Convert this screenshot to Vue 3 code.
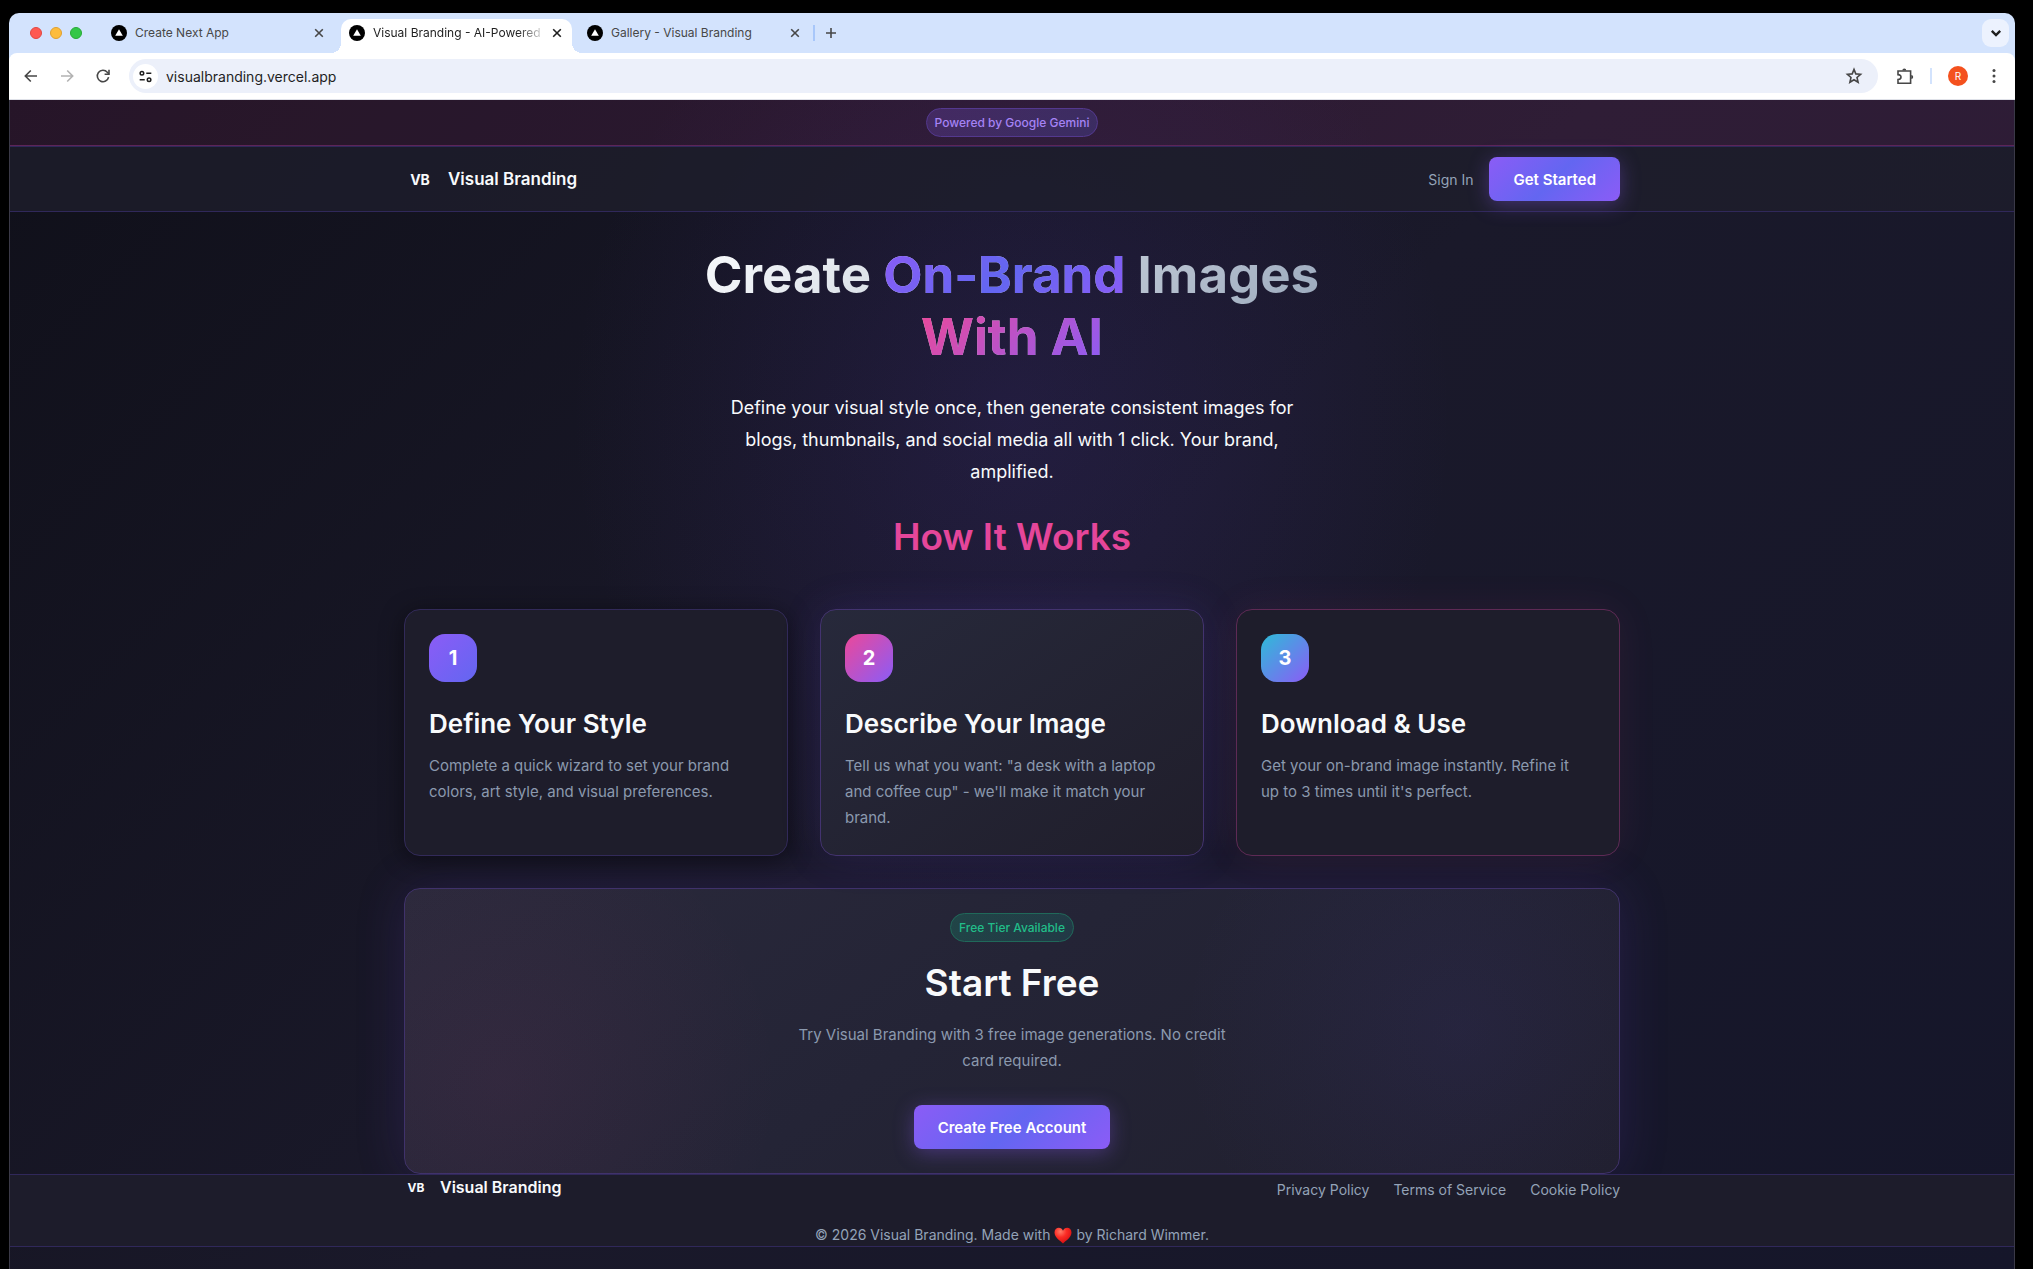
<script setup>
import { ref } from 'vue'

const tabs = [
  { id: 1, title: 'Create Next App' },
  { id: 2, title: 'Visual Branding - AI-Powered' },
  { id: 3, title: 'Gallery - Visual Branding' },
]
const activeTab = ref(2)
const address = ref('visualbranding.vercel.app')

const steps = [
  {
    number: 1,
    kind: 'plain',
    title: 'Define Your Style',
    text: 'Complete a quick wizard to set your brand colors, art style, and visual preferences.',
  },
  {
    number: 2,
    kind: 'violet',
    title: 'Describe Your Image',
    text: 'Tell us what you want: "a desk with a laptop and coffee cup" - we\'ll make it match your brand.',
  },
  {
    number: 3,
    kind: 'pink',
    title: 'Download & Use',
    text: 'Get your on-brand image instantly. Refine it up to 3 times until it\'s perfect.',
  },
]

const footerLinks = ['Privacy Policy', 'Terms of Service', 'Cookie Policy']
</script>

<template>
  <div class="desktop">
    <div class="window">
      <div class="tab-bar">
        <div class="lights">
          <button class="light red" aria-label="Close window"></button>
          <button class="light yellow" aria-label="Minimize window"></button>
          <button class="light green" aria-label="Zoom window"></button>
        </div>

        <div class="tabs">
          <div v-for="tab in tabs" :key="tab.id" class="tab" :class="{ active: tab.id === activeTab }">
            <button class="tab-main" @click="activeTab = tab.id">
              <svg class="favicon" viewBox="0 0 16 16" aria-hidden="true">
                <circle cx="8" cy="8" r="8" fill="#000" />
                <path d="M8 4.2 11.8 10.8H4.2Z" fill="#fff" />
              </svg>
              <span class="tab-title">{{ tab.title }}</span>
            </button>
            <button class="tab-close" aria-label="Close tab">
              <svg viewBox="0 0 10 10"><path d="M1.2 1.2 8.8 8.8M8.8 1.2 1.2 8.8" /></svg>
            </button>
          </div>
        </div>

        <span class="tab-divider"></span>
        <button class="new-tab" aria-label="New tab">
          <svg viewBox="0 0 12 12"><path d="M6 1V11M1 6H11" /></svg>
        </button>
        <button class="tab-search" aria-label="Search tabs">
          <svg viewBox="0 0 10 10"><path d="M1.5 3.2 5 6.7 8.5 3.2" /></svg>
        </button>
      </div>

      <div class="toolbar">
        <button class="tool" aria-label="Back">
          <svg viewBox="0 0 16 16"><path d="M14 8H2.5M7.8 2.5 2.3 8l5.5 5.5" /></svg>
        </button>
        <button class="tool faded" aria-label="Forward">
          <svg viewBox="0 0 16 16"><path d="M2 8h11.5M8.2 2.5 13.7 8l-5.5 5.5" /></svg>
        </button>
        <button class="tool reload" aria-label="Reload">
          <svg viewBox="0 0 16 16">
            <path d="M13.6 9.2A5.7 5.7 0 1 1 12.3 4.2L13.8 5.8" />
            <path d="M14 1.8V6.2H9.6" />
          </svg>
        </button>

        <div class="omnibox">
          <button class="site-info" aria-label="Site information">
            <svg viewBox="0 0 16 16">
              <circle cx="4.2" cy="4.6" r="1.9" />
              <path d="M8.8 4.6H14.2M1.8 11.4H7.2" />
              <circle cx="11.8" cy="11.4" r="1.9" />
            </svg>
          </button>
          <input v-model="address" class="address" type="text" aria-label="Address" />
          <button class="star" aria-label="Bookmark this page">
            <svg viewBox="0 0 18 18">
              <path d="M9 2.4 10.8 6.9l4.8.4-3.6 3.2 1.1 4.7L9 12.7l-4.1 2.5L6 10.5 2.4 7.3l4.8-.4Z" />
            </svg>
          </button>
        </div>

        <button class="extensions" aria-label="Extensions">
          <svg viewBox="0 0 18 18">
            <path d="M2 4H14.6V16.2H2V12.6C4 12.6 5 11.6 5 10.1S4 7.6 2 7.6Z" />
            <path class="solid" d="M6.3 3.4a2 2 0 0 1 4 0ZM15.2 8.1a2 2 0 0 1 0 4Z" />
          </svg>
        </button>
        <span class="tool-divider"></span>
        <button class="avatar" aria-label="Profile">R</button>
        <button class="more" aria-label="Menu">
          <svg viewBox="0 0 4 16">
            <circle cx="2" cy="2.5" r="1.5" />
            <circle cx="2" cy="8" r="1.5" />
            <circle cx="2" cy="13.5" r="1.5" />
          </svg>
        </button>
      </div>

      <div class="page">
        <div class="banner">
          <span class="badge violet">Powered by Google Gemini</span>
        </div>

        <header class="nav">
          <div class="container nav-row">
            <a href="#" class="brand">
              <span class="brand-mark">VB</span>
              <span class="brand-name">Visual Branding</span>
            </a>
            <nav class="nav-actions">
              <a href="#" class="sign-in">Sign In</a>
              <button class="primary">Get Started</button>
            </nav>
          </div>
        </header>

        <main class="container">
          <section class="hero">
            <h1>
              Create <span class="grad-violet">On-Brand</span> Images<br />
              <span class="grad-pink">With AI</span>
            </h1>
            <p>
              Define your visual style once, then generate consistent images for blogs, thumbnails,
              and social media all with 1 click. Your brand, amplified.
            </p>
          </section>

          <section class="how">
            <h2>How It Works</h2>
            <div class="steps">
              <article v-for="step in steps" :key="step.number" class="card" :class="step.kind">
                <span class="step-number">{{ step.number }}</span>
                <h3>{{ step.title }}</h3>
                <p>{{ step.text }}</p>
              </article>
            </div>
          </section>

          <section class="cta">
            <span class="badge green">Free Tier Available</span>
            <h2>Start Free</h2>
            <p>Try Visual Branding with 3 free image generations. No credit card required.</p>
            <button class="primary">Create Free Account</button>
          </section>
        </main>

        <footer class="footer">
          <div class="container">
            <div class="footer-row">
              <a href="#" class="brand small">
                <span class="brand-mark">VB</span>
                <span class="brand-name">Visual Branding</span>
              </a>
              <nav class="footer-links">
                <a v-for="link in footerLinks" :key="link" href="#">{{ link }}</a>
              </nav>
            </div>
            <p class="copyright">
              <span>© 2026 Visual Branding. Made with</span>
              <svg class="heart" viewBox="0 0 18 17" role="img" aria-label="love">
                <defs>
                  <radialGradient id="heart-fill" cx="0.35" cy="0.25" r="0.8">
                    <stop offset="0" stop-color="#ff7a66" />
                    <stop offset="0.45" stop-color="#fb2c25" />
                    <stop offset="1" stop-color="#d30d10" />
                  </radialGradient>
                </defs>
                <path
                  d="M9 16.4C6.5 13.6.5 10.6.5 5.4.5 2.6 2.4.7 4.8.7 6.7.7 8.3 1.8 9 3.7 9.7 1.8 11.3.7 13.2.7c2.4 0 4.3 1.9 4.3 4.7 0 5.2-6 8.2-8.5 11Z"
                  fill="url(#heart-fill)"
                />
              </svg>
              <span>by Richard Wimmer.</span>
            </p>
          </div>
        </footer>
      </div>
    </div>
  </div>
</template>

<style>
body {
  background: #000000;
}
</style>

<style scoped>
.desktop {
  box-sizing: border-box;
  min-height: 100vh;
  padding: 13px 18px 0 9px;
  display: flex;
  background: #000000;
  font-family: Inter, "Liberation Sans", sans-serif;
}

.desktop *,
.desktop *::before,
.desktop *::after {
  box-sizing: border-box;
}

button,
input {
  border: 0;
  padding: 0;
  margin: 0;
  background: none;
  font: inherit;
  color: inherit;
}

a {
  color: inherit;
  text-decoration: none;
}

h1,
h2,
h3,
p {
  margin: 0;
}

svg {
  display: block;
}

.window {
  flex: 1;
  min-width: 0;
  display: flex;
  flex-direction: column;
  border-radius: 10px 10px 0 0;
  overflow: hidden;
  background: #d3e3fd;
}

/* browser tabs */
.tab-bar {
  height: 40px;
  padding: 0 6px 0 21px;
  display: flex;
  align-items: center;
}

.lights {
  display: flex;
  gap: 8px;
  margin-right: 21px;
}

.light {
  width: 12px;
  height: 12px;
  border-radius: 50%;
}

.red {
  background: #fe5951;
  border: 1px solid #e2463f;
}

.yellow {
  background: #fdbc3c;
  border: 1px solid #e0a02e;
}

.green {
  background: #33c748;
  border: 1px solid #27aa35;
}

.tabs {
  align-self: stretch;
  display: flex;
  gap: 7px;
}

.tab {
  position: relative;
  width: 231px;
  margin-top: 6px;
  padding: 0 9px 7px 8px;
  display: flex;
  align-items: center;
  justify-content: space-between;
  color: #474747;
  font-size: 12px;
}

.tab.active {
  background: #ffffff;
  border-radius: 10px 10px 0 0;
  color: #1f1f1f;
}

.tab.active::before,
.tab.active::after {
  content: '';
  position: absolute;
  bottom: 0;
  width: 10px;
  height: 10px;
}

.tab.active::before {
  left: -10px;
  background: radial-gradient(circle at 0 0, transparent 10px, #ffffff 10px);
}

.tab.active::after {
  right: -10px;
  background: radial-gradient(circle at 100% 0, transparent 10px, #ffffff 10px);
}

.tab-main {
  display: flex;
  align-items: center;
  gap: 8px;
}

.favicon {
  width: 16px;
  height: 16px;
  flex: none;
}

.tab-title {
  white-space: nowrap;
}

.active .tab-title {
  mask-image: linear-gradient(to right, #000 86%, rgba(0, 0, 0, 0.2) 100%);
}

.tab-close svg,
.tab-search svg,
.new-tab svg {
  width: 12px;
  height: 12px;
}

.tab-close svg {
  padding: 1px;
}

.tab-close path,
.new-tab path,
.tab-search path {
  fill: none;
  stroke: currentColor;
  stroke-width: 2;
}

.tab-close path,
.new-tab path {
  stroke-width: 1.6;
}

.tab-divider {
  width: 2px;
  height: 16px;
  margin: 0 10px 0 3px;
  background: #a8c7fa;
}

.new-tab {
  color: #474747;
}

.tab-search {
  width: 27px;
  height: 28px;
  margin-left: auto;
  display: grid;
  place-items: center;
  border-radius: 9px;
  background: #ecf2fe;
  color: #1f1f1f;
}

/* address bar */
.toolbar {
  height: 47px;
  padding: 0 19px 0 14px;
  display: flex;
  align-items: center;
  border-bottom: 1px solid #dfe1e8;
  border-radius: 8px 8px 0 0;
  background: #ffffff;
  color: #474747;
}

.toolbar svg {
  fill: none;
  stroke: currentColor;
  stroke-width: 1.6;
}

.tool {
  margin-right: 20px;
}

.tool svg {
  width: 16px;
  height: 16px;
}

.tool.faded {
  color: #b3b3b3;
}

.tool.reload {
  margin-right: 18px;
}

.omnibox {
  flex: 1;
  height: 34px;
  padding: 0 15px 0 4px;
  display: flex;
  align-items: center;
  border-radius: 17px;
  background: #ecf0fa;
}

.site-info {
  width: 25px;
  height: 25px;
  display: grid;
  place-items: center;
  border-radius: 50%;
  background: #ffffff;
  color: #1f1f1f;
}

.site-info svg {
  width: 15px;
  height: 15px;
}

.address {
  flex: 1;
  margin: 0 8px;
  color: #1f1f1f;
  font-size: 14px;
  outline: none;
}

.star svg,
.extensions svg {
  width: 18px;
  height: 18px;
}

.extensions {
  margin: 0 16px 0 18px;
}

.extensions .solid {
  fill: currentColor;
  stroke: none;
}

.tool-divider {
  width: 2px;
  height: 16px;
  background: #d3e3fd;
}

.avatar {
  width: 20px;
  height: 20px;
  margin: 0 24px 0 16px;
  border-radius: 50%;
  background: #f4511e;
  color: #ffffff;
  font-size: 10px;
}

.more svg {
  width: 4px;
  height: 16px;
  fill: #474747;
  stroke: none;
}

/* landing page */
.page {
  flex: 1;
  border: 0 solid #3a3947;
  border-width: 0 1px;
  background:
    radial-gradient(ellipse 440px 500px at 50% 27%, rgba(76, 50, 160, 0.2), rgba(76, 50, 160, 0) 100%),
    linear-gradient(135deg, #10101a 0%, #1a192a 50%, #15162a 100%);
  color: #f8fafc;
}

.container {
  max-width: 1280px;
  margin: 0 auto;
  padding: 0 32px;
}

.banner {
  height: 46px;
  display: flex;
  align-items: center;
  justify-content: center;
  border-bottom: 1px solid #5d2558;
  background: rgba(220, 64, 156, 0.11);
}

.badge {
  height: 29px;
  padding: 0 8px;
  display: inline-flex;
  align-items: center;
  border: 1px solid;
  border-radius: 15px;
  font-size: 12px;
  font-weight: 500;
}

.badge.violet {
  border-color: #54398f;
  background: linear-gradient(135deg, rgba(139, 92, 246, 0.22), rgba(99, 102, 241, 0.22));
  color: #a583f5;
}

.badge.green {
  border-color: #20695a;
  background: linear-gradient(135deg, rgba(16, 185, 129, 0.22), rgba(20, 184, 166, 0.14));
  color: #21bd89;
}

.nav {
  border: 0 solid #30285a;
  border-width: 1px 0;
  background: rgba(30, 30, 44, 0.8);
}

.nav-row {
  height: 64px;
  display: flex;
  align-items: center;
  justify-content: space-between;
}

.brand {
  display: flex;
  align-items: center;
  gap: 12px;
  font-weight: 600;
}

.brand-mark {
  width: 32px;
  font-size: 14px;
  font-weight: 700;
  text-align: center;
}

.brand-name {
  font-size: 17px;
}

.nav-actions {
  display: flex;
  align-items: center;
  gap: 16px;
}

.sign-in {
  color: #94a3b8;
  font-size: 14px;
}

.primary {
  height: 44px;
  padding: 0 24px;
  border-radius: 8px;
  background: linear-gradient(135deg, #8b5cf6 0%, #6366f1 50%, #8b5cf6 100%);
  box-shadow: 0 4px 20px rgba(139, 92, 246, 0.35);
  color: #ffffff;
  font-size: 15px;
  font-weight: 600;
}

.hero {
  padding-top: 32px;
  text-align: center;
}

h1 {
  width: fit-content;
  margin: 0 auto 24px;
  background: linear-gradient(135deg, #f8fafc 0%, #94a3b8 100%);
  background-clip: text;
  color: transparent;
  font-size: 51px;
  font-weight: 700;
  line-height: 62px;
}

.grad-violet,
.grad-pink {
  background: linear-gradient(135deg, #8b5cf6 0%, #6366f1 50%, #8b5cf6 100%);
  background-clip: text;
}

.grad-pink {
  background-image: linear-gradient(135deg, #ec4899 0%, #8b5cf6 100%);
}

.hero p {
  max-width: 600px;
  margin: 0 auto;
  font-size: 18px;
  line-height: 32px;
}

h2 {
  font-size: 37px;
  font-weight: 600;
  line-height: 48px;
}

.how h2 {
  margin: 25px 0 48px;
  color: #e5469a;
  text-align: center;
}

.steps {
  display: grid;
  grid-template-columns: repeat(3, minmax(0, 1fr));
  gap: 32px;
}

.card {
  padding: 24px;
  border: 1px solid #322a59;
  border-radius: 16px;
  background: #1e1d2b;
}

.card.plain {
  box-shadow: 0 4px 24px rgba(0, 0, 0, 0.45);
}

.card.violet {
  border-color: #43336f;
  background: linear-gradient(145deg, #27293b 0%, #201e2b 100%);
  box-shadow: 0 0 40px rgba(100, 70, 210, 0.16);
}

.card.pink {
  border-color: #5e2a55;
  box-shadow: 0 0 40px rgba(236, 72, 153, 0.08);
}

.step-number {
  width: 48px;
  height: 48px;
  display: grid;
  place-items: center;
  border-radius: 16px;
  background: linear-gradient(135deg, #8b5cf6, #6366f1);
  color: #ffffff;
  font-size: 20px;
  font-weight: 700;
}

.violet .step-number {
  background: linear-gradient(135deg, #ec4899, #8b5cf6);
}

.pink .step-number {
  background: linear-gradient(135deg, #2dbcd8, #8b5cf6);
}

.card h3 {
  margin: 24px 0 12px;
  font-size: 26px;
  font-weight: 600;
  line-height: 35px;
}

.card p,
.cta p {
  color: #8b99ae;
  font-size: 15px;
  line-height: 26px;
}

.card p {
  max-width: 320px;
}

.cta {
  margin-top: 32px;
  padding: 24px;
  display: flex;
  flex-direction: column;
  align-items: center;
  border: 1px solid #40326b;
  border-radius: 16px;
  background:
    radial-gradient(circle 280px at 8% 68%, rgba(236, 72, 153, 0.06), rgba(236, 72, 153, 0) 100%),
    radial-gradient(circle 280px at 87% 50%, rgba(99, 82, 241, 0.07), rgba(99, 82, 241, 0) 100%),
    linear-gradient(145deg, #2a293b 0%, #242436 45%, #201f2d 100%);
  box-shadow: 0 0 50px rgba(100, 60, 200, 0.18);
  text-align: center;
}

.cta h2 {
  margin: 17px 0 15px;
}

.cta p {
  max-width: 448px;
  margin-bottom: 31px;
}

.footer {
  position: relative;
  border: 0 solid #30285a;
  border-width: 1px 0;
  background: #1d1c2b;
}

.footer-row {
  height: 28px;
  margin-bottom: 21px;
  display: flex;
  justify-content: space-between;
}

.brand.small {
  height: 24px;
}

.small .brand-mark {
  width: 24px;
  font-size: 12px;
}

.small .brand-name {
  font-size: 16px;
}

.footer-links {
  display: flex;
  align-items: center;
  gap: 24px;
  color: #94a3b8;
  font-size: 14px;
}

.copyright {
  display: flex;
  align-items: center;
  justify-content: center;
  gap: 4px;
  color: #94a3b8;
  font-size: 14px;
  line-height: 22px;
}

.heart {
  width: 18px;
  height: 17px;
}

@media (max-width: 900px) {
  .steps {
    grid-template-columns: 1fr;
  }
}
</style>
